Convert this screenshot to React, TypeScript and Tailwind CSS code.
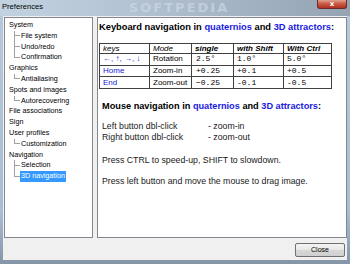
import React from "react";

const treeFont = { fontFamily: '"Liberation Sans", Arial, sans-serif' };

type Node = { label: string; children?: string[]; };

const tree: Node[] = [
  { label: "System", children: ["File system", "Undo/redo", "Confirmation"] },
  { label: "Graphics", children: ["Antialiasing"] },
  { label: "Spots and images", children: ["Autorecovering"] },
  { label: "File associations" },
  { label: "Sign" },
  { label: "User profiles", children: ["Customization"] },
  { label: "Navigation", children: ["Selection", "3D navigation"] },
];

function ChildRow({ label, last, selected }: { label: string; last: boolean; selected?: boolean }) {
  return (
    <div className="flex h-[10.8px] items-stretch">
      <div className="w-[9px] shrink-0" />
      <div className="w-[6px] shrink-0 flex flex-col">
        {last ? (
          <div className="h-1/2 border-l border-b border-[#a0a0a0]" />
        ) : (
          <div className="h-full border-l border-[#a0a0a0] flex flex-col">
            <div className="h-1/2 border-b border-[#a0a0a0]" />
          </div>
        )}
      </div>
      <div className="flex items-center">
        {selected ? (
          <span className="bg-[#3399ff] text-white leading-[10.8px] h-[10.8px] px-[1px]">{label}</span>
        ) : (
          <span className="leading-[10.8px] ml-[1px]">{label}</span>
        )}
      </div>
    </div>
  );
}

export default function App() {
  const body = { fontFamily: '"Liberation Sans", Arial, sans-serif' };
  const mono = { fontFamily: '"Liberation Mono", "Courier New", monospace' };
  return (
    <div
      className="w-[350px] h-[264px] flex flex-col overflow-hidden bg-[linear-gradient(to_bottom,#b7c9dc,#a9bed3_80%,#8595a8)]"
      style={body}
    >
      {/* title bar */}
      <div className="h-[16px] shrink-0 flex items-start relative bg-[linear-gradient(to_right,#c3d2e1,#b5c4d4_35%,#a3b2c3_70%,#95a3b3)]">
        <span className="text-[7.6px] leading-[12px] text-black ml-[2px] mt-[1px]" style={treeFont}>
          Preferences
        </span>
        <span className="ml-[86px] text-[13px] font-bold tracking-[2px] text-[#cdd8e4]/70 leading-[16px]" style={{ fontFamily: '"DejaVu Sans", sans-serif' }}>
          SOFTPEDIA
        </span>
        <div className="absolute right-[3px] top-0 w-[30px] h-[9px] rounded-b-[3px] border border-t-0 border-[#6a2a2a] bg-[linear-gradient(to_bottom,#e0a090,#c8563f_50%,#b03020)] flex items-center justify-center">
          <span className="text-white text-[7px] font-bold leading-[8px]" style={{ fontFamily: '"DejaVu Sans", sans-serif' }}>x</span>
        </div>
      </div>

      {/* client */}
      <div className="flex-1 mx-[3px] mb-[4px] bg-[#f0f0f0] flex flex-col">
        <div className="flex gap-[4px] ml-[1px] mt-[1px] h-[221px]">
          {/* tree */}
          <div className="w-[89px] h-full shrink-0 bg-white border border-[#828790] pt-[2px] text-[7.2px] text-black" style={treeFont}>
            {tree.map((n) => (
              <div key={n.label}>
                <div className="h-[10.8px] leading-[10.8px] pl-[4px]">{n.label}</div>
                {n.children?.map((c, i) => (
                  <ChildRow key={c} label={c} last={i === n.children!.length - 1} selected={c === "3D navigation"} />
                ))}
              </div>
            ))}
          </div>

          {/* content panel */}
          <div className="w-[250px] h-full bg-white border border-[#828790] flex flex-col text-[#1a1a1a]">
            <div className="mt-[3.5px] pl-[1px] text-[9.3px] font-bold leading-[11px] text-black whitespace-nowrap">
              Keyboard navigation in <span className="text-[#1a1ae0]">quaternios</span> and{" "}
              <span className="text-[#1a1ae0]">3D attractors</span>:
            </div>

            <table className="mt-[10.5px] ml-[1px] border-collapse text-[8px] text-black w-[232px]" style={{ tableLayout: "fixed" }}>
              <colgroup>
                <col className="w-[50px]" />
                <col className="w-[42px]" />
                <col className="w-[42px]" />
                <col className="w-[50px]" />
                <col className="w-[48px]" />
              </colgroup>
              <tbody>
                <tr className="h-[10px]">
                  <td className="border border-[#404040] pl-[3px] italic leading-[9px] py-0">keys</td>
                  <td className="border border-[#404040] pl-[3px] italic leading-[9px] py-0">Mode</td>
                  <td className="border border-[#404040] pl-[3px] italic font-bold leading-[9px] py-0">single</td>
                  <td className="border border-[#404040] pl-[3px] italic font-bold leading-[9px] py-0">with Shift</td>
                  <td className="border border-[#404040] pl-[3px] italic font-bold leading-[9px] py-0">With Ctrl</td>
                </tr>
                {[
                  ["←, ↑, →, ↓", "Rotation", "2.5°", "1.0°", "5.0°"],
                  ["Home", "Zoom-in", "+0.25", "+0.1", "+0.5"],
                  ["End", "Zoom-out", "−0.25", "-0.1", "-0.5"],
                ].map((r) => (
                  <tr key={r[0]} className="h-[11.7px]">
                    <td className="border border-[#404040] pl-[3px] text-[#1a1ae0] leading-[10px] py-0 whitespace-nowrap">{r[0]}</td>
                    <td className="border border-[#404040] pl-[3px] leading-[10px] py-0">{r[1]}</td>
                    <td className="border border-[#404040] pl-[4px] leading-[10px] py-0" style={mono}>{r[2]}</td>
                    <td className="border border-[#404040] pl-[3px] leading-[10px] py-0" style={mono}>{r[3]}</td>
                    <td className="border border-[#404040] pl-[3px] leading-[10px] py-0" style={mono}>{r[4]}</td>
                  </tr>
                ))}
              </tbody>
            </table>

            <div className="mt-[11.9px] pl-[4px] text-[9.2px] font-bold leading-[11px] text-black whitespace-nowrap">
              Mouse navigation in <span className="text-[#1a1ae0]">quaternios</span> and{" "}
              <span className="text-[#1a1ae0]">3D attractors</span>:
            </div>

            <div className="mt-[9.3px] pl-[4px] text-[8.75px] leading-[11px] grid grid-cols-[106px_1fr]">
              <span>Left button dbl-click</span>
              <span>- zoom-in</span>
              <span>Right button dbl-click</span>
              <span>- zoom-out</span>
            </div>

            <div className="mt-[12px] pl-[4px] text-[8.75px] leading-[11px]">
              Press CTRL to speed-up, SHIFT to slowdown.
            </div>
            <div className="mt-[9.7px] pl-[4px] text-[8.75px] leading-[11px]">
              Press left button and move the mouse to drag image.
            </div>
          </div>
        </div>

        <div className="flex justify-end mt-[5px] mr-[2px]">
          <button className="w-[50px] h-[14px] rounded-[2px] border border-[#707070] bg-[linear-gradient(to_bottom,#f4f4f4,#e8e8e8_50%,#d8d8d8_51%,#cfcfcf)] text-[7px] leading-[12px] text-black" style={treeFont}>
            Close
          </button>
        </div>
      </div>
    </div>
  );
}
